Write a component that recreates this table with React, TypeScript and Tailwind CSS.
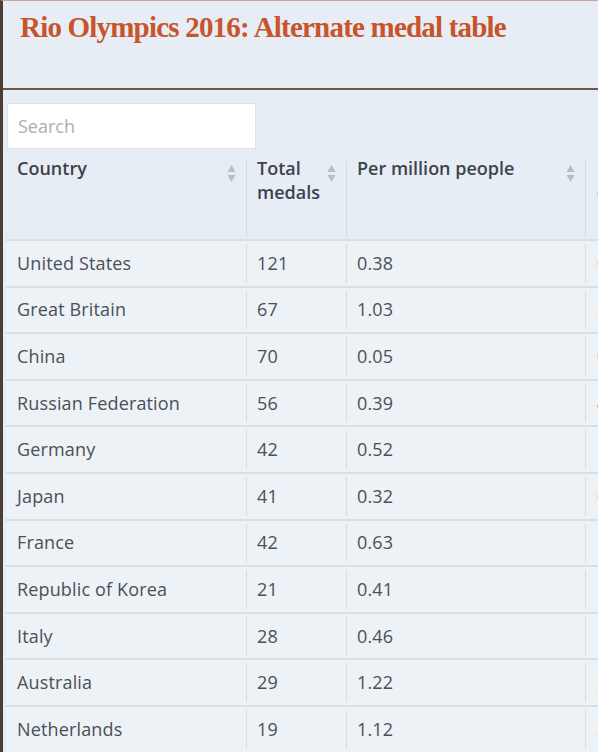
import React from "react"

const rows = [
  ["United States", "121", "0.38", "0.65"],
  ["Great Britain", "67", "1.03", "2.31"],
  ["China", "70", "0.05", "0.63"],
  ["Russian Federation", "56", "0.39", "4.21"],
  ["Germany", "42", "0.52", "1.22"],
  ["Japan", "41", "0.32", "0.84"],
  ["France", "42", "0.63", "1.69"],
  ["Republic of Korea", "21", "0.41", "1.56"],
  ["Italy", "28", "0.46", "1.36"],
  ["Australia", "29", "1.22", "2.33"],
  ["Netherlands", "19", "1.12", "2.43"],
]

const SortIcon = () => (
  <svg width="9" height="19" viewBox="0 0 9 19" className="shrink-0">
    <path d="M4.5 1 L8.5 8 L0.5 8 Z" fill="#b7bec6" />
    <path d="M0.5 11 L8.5 11 L4.5 18 Z" fill="#b7bec6" />
  </svg>
)

export default function App() {
  const sans = { fontFamily: '"Open Sans", "Noto Sans", sans-serif' }

  return (
    <div className="w-[604px] h-[752px] bg-white overflow-hidden">
      <div
        className="w-[598px] h-[752px] bg-[#e6edf4] border-l-[3px] border-l-[#4d3e33] border-t border-t-[#c9a596] overflow-hidden"
        style={sans}
      >
        {/* Title */}
        <div className="h-[87px] pl-[17px] pt-[7px]">
          <h1
            className="text-[29px] font-bold text-[#c9532b] tracking-[-0.8px] leading-[38px] whitespace-nowrap"
            style={{ fontFamily: '"Liberation Serif", "DejaVu Serif", serif' }}
          >
            Rio Olympics 2016: Alternate medal table
          </h1>
        </div>
        <div className="h-[2px] bg-[#6f574b]" />

        {/* Search */}
        <div className="pl-[4px] pt-[13px]">
          <div className="w-[249px] h-[46px] bg-white border border-[#dce3e9] flex items-center pl-[10px]">
            <span className="text-[18px] text-[#a8afb6]">Search</span>
          </div>
        </div>

        {/* Table */}
        <div className="ml-[3px] w-[700px]">
          <div className="flex h-[92px] border-b-2 border-[#d8e0e7] text-[18px] font-semibold text-[#3d434c] leading-[24px]">
            <div className="w-[240px] shrink-0 flex justify-between pl-[11px] pr-[10px] pt-[7px]">
              <span>Country</span>
              <div className="pt-[8px]">
                <SortIcon />
              </div>
            </div>
            <div className="w-px shrink-0 bg-[#d3dae1] mt-[12px] mb-[2px]" />
            <div className="w-[99px] shrink-0 flex justify-between pl-[10px] pr-[10px] pt-[7px]">
              <span>
                Total
                <br />
                medals
              </span>
              <div className="pt-[8px]">
                <SortIcon />
              </div>
            </div>
            <div className="w-px shrink-0 bg-[#d3dae1] mt-[12px] mb-[2px]" />
            <div className="w-[238px] shrink-0 flex justify-between pl-[10px] pr-[10px] pt-[7px]">
              <span>Per million people</span>
              <div className="pt-[8px]">
                <SortIcon />
              </div>
            </div>
            <div className="w-px shrink-0 bg-[#d3dae1] mt-[12px] mb-[2px]" />
            <div className="w-[120px] shrink-0 pl-[11px] pt-[7px]">
              <span>
                Per $bn
                <br />
                of
                <br />
                GDP
              </span>
            </div>
          </div>

          {rows.map((r, i) => (
            <div
              key={i}
              className="flex h-[46.6px] bg-[#edf2f6] border-b-2 border-[#d8e0e7] text-[18px] tracking-[0.15px] text-[#4a5058]"
            >
              <div className="w-[240px] shrink-0 flex items-center pl-[11px]">{r[0]}</div>
              <div className="w-px shrink-0 bg-[#d6dde4] my-[3px]" />
              <div className="w-[99px] shrink-0 flex items-center pl-[10px]">{r[1]}</div>
              <div className="w-px shrink-0 bg-[#d6dde4] my-[3px]" />
              <div className="w-[238px] shrink-0 flex items-center pl-[10px]">{r[2]}</div>
              <div className="w-px shrink-0 bg-[#d6dde4] my-[3px]" />
              <div className="w-[120px] shrink-0 flex items-center pl-[11px]">{r[3]}</div>
            </div>
          ))}
        </div>
      </div>
    </div>
  )
}
